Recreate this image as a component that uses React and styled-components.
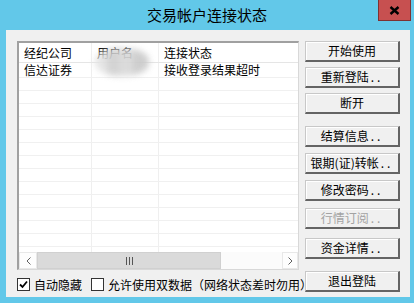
import styled, { createGlobalStyle } from "styled-components";

const FONT = `"Noto Sans CJK SC", "Noto Sans", "Liberation Sans", sans-serif`;

const GlobalStyle = createGlobalStyle`
    html, body {
        margin: 0;
        padding: 0;
        background: #62c8e9;
    }
    * {
        box-sizing: border-box;
    }
`

const Window = styled.div`
    width: 414px;
    height: 303px;
    background: #62c8e9;
    display: flex;
    flex-direction: column;
    font-family: ${FONT};
    color: #000;
    overflow: hidden;
`

const TitleBar = styled.div`
    height: 30px;
    display: grid;
    grid-template-columns: 1fr auto 1fr;
`

const Title = styled.div`
    grid-column: 2;
    font-size: 15px;
    line-height: 17px;
    padding-top: 6px;
`

const CloseButton = styled.div`
    grid-column: 3;
    justify-self: end;
    width: 33px;
    height: 21px;
    margin-right: 3px;
    background: #c75050;
    border: 1px solid #7e3131;
    border-top: none;
    display: flex;
    align-items: center;
    justify-content: center;
`

const Client = styled.div`
    flex: 1;
    margin: 0 4px 6px 6px;
    background: #f0f0f0;
    display: flex;
    padding: 11px 10px 0 11px;
`

const LeftColumn = styled.div`
    width: 282px;
    display: flex;
    flex-direction: column;
`

const ListView = styled.div`
    position: relative;
    height: 229px;
    background: #fff;
    border-top: 2px solid #a0a0a0;
    border-left: 2px solid #a0a0a0;
    border-right: 1px solid #d8d8d8;
    border-bottom: 1px solid #d8d8d8;
    display: flex;
    flex-direction: column;
    overflow: hidden;
`

const Rows = styled.div`
    flex: 1;
    display: flex;
    flex-direction: column;
`

const Row = styled.div`
    display: flex;
    flex: ${p => (p.$fill ? 1 : "none")};
    height: ${p => (p.$fill ? "auto" : `${p.$h || 13}px`)};
    border-bottom: ${p => (p.$fill ? "none" : `1px solid ${p.$header ? "#e5e5e5" : "#f0f0f0"}`)};
`

const Cell = styled.div`
    width: ${p => (p.$w ? `${p.$w}px` : "auto")};
    flex: ${p => (p.$w ? "none" : 1)};
    border-right: ${p => (p.$w ? "1px solid #efefef" : "none")};
    display: flex;
    align-items: center;
    font-size: 12px;
    line-height: 14px;
    padding-left: 5px;
    white-space: nowrap;
`

const Smudge = styled.div`
    position: absolute;
    left: 76px;
    top: 5px;
    width: 54px;
    height: 28px;
    border-radius: 45%;
    background: linear-gradient(90deg, #e2e2e2 0 22%, #cfcfcf 22% 45%, #d8d8d8 45% 70%, #c9c9c9 70% 100%);
    filter: blur(3px);
    opacity: 0.9;
`

const ScrollBar = styled.div`
    height: 17px;
    display: flex;
    background: #fbfbfb;
    flex: none;
`

const ScrollArrow = styled.div`
    width: ${p => p.$w}px;
    border: 1px solid #e8e8e8;
    background: #fdfdfd;
    display: flex;
    align-items: center;
    justify-content: center;
`

const Thumb = styled.div`
    width: 184px;
    background: #dadada;
    border: 1px solid #d0d0d0;
    display: flex;
    align-items: center;
    justify-content: center;
`

const Track = styled.div`
    flex: 1;
    background: #fbfbfb;
`

const OptionsRow = styled.div`
    display: flex;
    align-items: center;
    margin-top: 7px;
    height: 15px;
`

const Option = styled.label`
    display: flex;
    align-items: center;
    font-size: 12px;
    line-height: 14px;
    margin-right: ${p => p.$mr || 0}px;
    white-space: nowrap;
`

const Box = styled.span`
    width: 13px;
    height: 13px;
    border: 1px solid #333;
    background: #fff;
    margin-right: 4px;
    display: flex;
    align-items: center;
    justify-content: center;
`

const RightColumn = styled.div`
    margin-left: 6px;
    width: 95px;
    display: flex;
    flex-direction: column;
`

const Button = styled.div`
    height: 21px;
    margin-top: ${p => p.$gap || 0}px;
    background: #f0f0f0;
    border-top: 1px solid #c8c8c8;
    border-left: 1px solid #c8c8c8;
    border-right: 2px solid #646464;
    border-bottom: 2px solid #646464;
    box-shadow: inset 1px 1px 0 #fff;
    display: flex;
    align-items: center;
    justify-content: center;
    font-size: 12px;
    line-height: 14px;
    color: ${p => (p.$disabled ? "#a3a3a3" : "#000")};
    white-space: nowrap;
`

const Dots = styled.span`
    letter-spacing: 3px;
    margin-left: 2px;
`

const Check = () => (
    <svg width="9" height="9" viewBox="0 0 9 9">
        <polyline points="1,4.5 3.5,7 8,1.5" fill="none" stroke="#000" strokeWidth="1.8" />
    </svg>
)

const buttons = [
    { label: "开始使用", gap: 0 },
    { label: "重新登陆", gap: 5, dots: true },
    { label: "断开", gap: 5 },
    { label: "结算信息", gap: 12, dots: true },
    { label: "银期(证)转帐", gap: 6, dots: true },
    { label: "修改密码", gap: 6, dots: true },
    { label: "行情订阅", gap: 7, dots: true, disabled: true },
    { label: "资金详情", gap: 9, dots: true },
    { label: "退出登陆", gap: 12 },
]

const App = () => {
    return (
        <Window>
            <GlobalStyle />
            <TitleBar>
                <Title>交易帐户连接状态</Title>
                <CloseButton>
                    <svg width="11" height="9" viewBox="0 0 11 9">
                        <path d="M1.5 1 L9.5 8 M9.5 1 L1.5 8" stroke="#000" strokeWidth="2.4" />
                    </svg>
                </CloseButton>
            </TitleBar>
            <Client>
                <LeftColumn>
                    <ListView>
                        <Row $header $h={20}>
                            <Cell $w={73}>经纪公司</Cell>
                            <Cell $w={67}>用户名</Cell>
                            <Cell>连接状态</Cell>
                        </Row>
                        <Rows>
                            <Row $h={15}>
                                <Cell $w={73}>信达证券</Cell>
                                <Cell $w={67}></Cell>
                                <Cell>接收登录结果超时</Cell>
                            </Row>
                            {Array.from({ length: 13 }).map((_, i) => (
                                <Row key={i}>
                                    <Cell $w={73} />
                                    <Cell $w={67} />
                                    <Cell />
                                </Row>
                            ))}
                            <Row $fill>
                                <Cell $w={73} />
                                <Cell $w={67} />
                                <Cell />
                            </Row>
                        </Rows>
                        <ScrollBar>
                            <ScrollArrow $w={18}>
                                <svg width="5" height="8" viewBox="0 0 5 8">
                                    <polyline points="4.5,0.5 1,4 4.5,7.5" fill="none" stroke="#606060" />
                                </svg>
                            </ScrollArrow>
                            <Thumb>
                                <svg width="7" height="8" viewBox="0 0 7 8">
                                    <path d="M0.5 0 V8 M3.5 0 V8 M6.5 0 V8" stroke="#555" />
                                </svg>
                            </Thumb>
                            <Track />
                            <ScrollArrow $w={16}>
                                <svg width="5" height="8" viewBox="0 0 5 8">
                                    <polyline points="0.5,0.5 4,4 0.5,7.5" fill="none" stroke="#606060" />
                                </svg>
                            </ScrollArrow>
                        </ScrollBar>
                        <Smudge />
                    </ListView>
                    <OptionsRow>
                        <Option $mr={9}>
                            <Box><Check /></Box>
                            自动隐藏
                        </Option>
                        <Option>
                            <Box />
                            允许使用双数据（网络状态差时勿用）
                        </Option>
                    </OptionsRow>
                </LeftColumn>
                <RightColumn>
                    {buttons.map(b => (
                        <Button key={b.label} $gap={b.gap} $disabled={b.disabled}>
                            {b.label}
                            {b.dots && <Dots>..</Dots>}
                        </Button>
                    ))}
                </RightColumn>
            </Client>
        </Window>
    );
}

export default App;
